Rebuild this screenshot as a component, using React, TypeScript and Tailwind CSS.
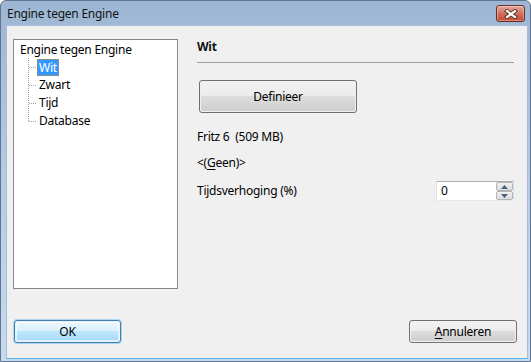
import React from "react";

const font = { fontFamily: '"Noto Sans", "Open Sans", sans-serif' };

function TreeLines() {
  return (
    <svg
      className="absolute left-0 top-0 pointer-events-none"
      width="60"
      height="100"
      viewBox="0 0 60 100"
    >
      <g stroke="#a0a0a0" strokeWidth="1" strokeDasharray="1 1" fill="none">
        <line x1="14.5" y1="18" x2="14.5" y2="82" />
        <line x1="15" y1="27.5" x2="23" y2="27.5" />
        <line x1="15" y1="45.5" x2="23" y2="45.5" />
        <line x1="15" y1="63.5" x2="23" y2="63.5" />
        <line x1="15" y1="81.5" x2="23" y2="81.5" />
      </g>
    </svg>
  );
}

function CloseX() {
  return (
    <svg width="14" height="10" viewBox="0 0 14 10">
      <g strokeLinecap="square">
        <line x1="3" y1="2" x2="11" y2="8" stroke="#5a2a22" strokeWidth="4" />
        <line x1="11" y1="2" x2="3" y2="8" stroke="#5a2a22" strokeWidth="4" />
        <line x1="3" y1="2" x2="11" y2="8" stroke="#ffffff" strokeWidth="2.2" />
        <line x1="11" y1="2" x2="3" y2="8" stroke="#ffffff" strokeWidth="2.2" />
      </g>
    </svg>
  );
}

function Arrow({ up }: { up: boolean }) {
  return (
    <svg width="7" height="4" viewBox="0 0 7 4">
      {up ? (
        <polygon points="0,4 7,4 3.5,0" fill="#4c607f" />
      ) : (
        <polygon points="0,0 7,0 3.5,4" fill="#4c607f" />
      )}
    </svg>
  );
}

export default function App() {
  return (
    <div
      className="w-[531px] h-[362px] overflow-hidden bg-white tracking-[-0.25px]"
      style={font}
    >
      <div className="w-[531px] h-[362px] flex flex-col border border-[#5f7591] rounded-t-[6px] bg-gradient-to-b from-[#9cb6d3] via-[#b6cce5] to-[#c8daee]">
        {/* title bar */}
        <div className="h-[24px] flex items-start justify-between shrink-0">
          <div className="pl-[6px] pt-[5px] text-[12px] leading-[16px] text-[#141414]">
            Engine tegen Engine
          </div>
          <div className="mt-[4px] mr-[5px] w-[29px] h-[17px] rounded-[3px] border border-[#6b2c22] bg-gradient-to-b from-[#e4a99c] via-[#d0705d] to-[#c24a35] flex items-center justify-center shadow-[inset_0_0_0_1px_rgba(255,255,255,0.35)]">
            <CloseX />
          </div>
        </div>
        {/* client area */}
        <div className="flex-1 ml-[5px] mr-[2px] mb-[2px] border border-[#a9bdd6] border-b-[#4fb6e6] bg-[#f0f0f0] flex flex-col text-[12px] text-black">
          <div className="flex pl-[6px] pt-[13px]">
            {/* tree */}
            <div className="relative w-[165px] h-[250px] border border-[#828790] bg-white shrink-0">
              <TreeLines />
              <div className="relative flex flex-col pt-[1px]">
                <div className="h-[17px] flex items-center pl-[6px] leading-[16px]">
                  Engine tegen Engine
                </div>
                <div className="h-[18px] flex items-center pl-[23px]">
                  <span className="h-[17px] px-[1px] flex items-center bg-[#3399ff] text-white border border-dotted border-[#d9822b] leading-[15px]">
                    Wit
                  </span>
                </div>
                <div className="h-[18px] flex items-center pl-[25px]">Zwart</div>
                <div className="h-[18px] flex items-center pl-[25px]">Tijd</div>
                <div className="h-[18px] flex items-center pl-[25px]">Database</div>
              </div>
            </div>
            {/* right panel */}
            <div className="ml-[19px] w-[317px] flex flex-col">
              <div className="leading-[16px] font-bold text-[12px] text-[#111]">Wit</div>
              <div className="mt-[7px] h-px bg-[#a0a0a0]" />
              <div className="mt-[17px] ml-[2px] w-[158px] h-[33px] rounded-[3px] border border-[#707070] p-px">
                <div className="w-full h-full rounded-[2px] flex items-center justify-center bg-[linear-gradient(to_bottom,#f2f2f2_0%,#ebebeb_50%,#dddddd_50%,#cfcfcf_100%)]">
                  Definieer
                </div>
              </div>
              <div className="mt-[16px] leading-[16px] whitespace-pre">Fritz 6  (509 MB)</div>
              <div className="mt-[10px] leading-[16px]">
                &lt;(<span className="underline underline-offset-2">G</span>een)&gt;
              </div>
              <div className="mt-[10px] h-[20px] flex items-center justify-between">
                <span className="leading-[16px]">Tijdsverhoging (%)</span>
                <div className="w-[78px] h-[20px] flex border border-[#abadb3] border-l-[#e2e3ea] border-r-[#dbdfe6] border-b-[#e3e9ef] bg-white">
                  <div className="flex-1 pl-[4px] flex items-center leading-[16px]">0</div>
                  <div className="w-[17px] flex flex-col">
                    <div className="flex-1 border border-[#b3b3b3] rounded-[2px] bg-gradient-to-b from-[#f2f2f2] to-[#dcdcdc] flex items-center justify-center">
                      <Arrow up />
                    </div>
                    <div className="flex-1 border border-[#b3b3b3] rounded-[2px] bg-gradient-to-b from-[#f2f2f2] to-[#dcdcdc] flex items-center justify-center">
                      <Arrow up={false} />
                    </div>
                  </div>
                </div>
              </div>
            </div>
          </div>
          {/* bottom buttons */}
          <div className="mt-[31px] flex justify-between pl-[7px] pr-[10px]">
            <div className="w-[107px] h-[23px] rounded-[3px] border border-[#3c7fb1] p-px shadow-[0_0_0_1px_rgba(92,181,232,0.45)]">
              <div className="w-full h-full rounded-[2px] flex items-center justify-center bg-[linear-gradient(to_bottom,#eaf6fd_0%,#d9f0fc_50%,#bee6fd_50%,#a7d9f5_100%)] shadow-[inset_0_0_0_1px_rgba(255,255,255,0.6)]">
                OK
              </div>
            </div>
            <div className="w-[108px] h-[23px] rounded-[3px] border border-[#707070] p-px">
              <div className="w-full h-full rounded-[2px] flex items-center justify-center bg-[linear-gradient(to_bottom,#f2f2f2_0%,#ebebeb_50%,#dddddd_50%,#cfcfcf_100%)]">
                <span>
                  <span className="underline underline-offset-2">A</span>nnuleren
                </span>
              </div>
            </div>
          </div>
        </div>
      </div>
    </div>
  );
}
